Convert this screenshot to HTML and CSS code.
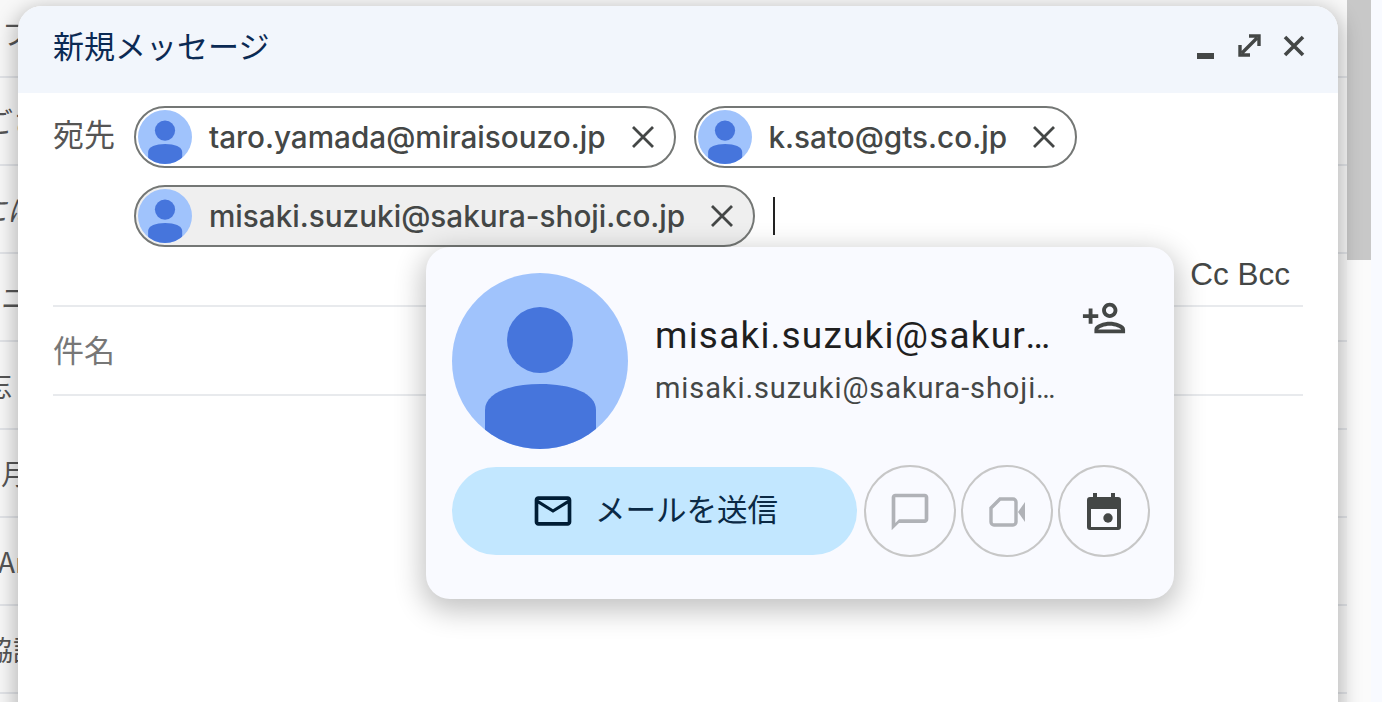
FILE: index.html
```html
<!DOCTYPE html>
<html lang="ja">
<head>
<meta charset="utf-8">
<title>新規メッセージ</title>
<link rel="stylesheet" href="styles.css">
</head>
<body>
<svg class="defs" width="0" height="0" aria-hidden="true">
  <defs>
    <clipPath id="round"><circle cx="88" cy="88" r="88"/></clipPath>
    <symbol id="person" viewBox="0 0 176 176">
      <circle cx="88" cy="88" r="88" fill="#a0c3fc"/>
      <g clip-path="url(#round)" fill="#4675dc">
        <circle cx="88" cy="67" r="33"/>
        <path d="M33 180V137C33 120 58 111 88.500 111S144 120 144 137V180Z"/>
      </g>
    </symbol>
    <symbol id="x" viewBox="0 0 24 24">
      <path d="M2 2L22 22M22 2L2 22" fill="none" stroke="currentColor" stroke-width="2.800"/>
    </symbol>
  </defs>
</svg>

<div class="desktop">
  <div class="list">
    <div class="row"><span class="t1">フ</span></div>
    <div class="row"><span class="t2">ござ</span></div>
    <div class="row"><span class="t3">には</span></div>
    <div class="row"><span class="t4">ニ</span></div>
    <div class="row"><span class="t5">忘</span></div>
    <div class="row"><span class="t6">月</span></div>
    <div class="row"><span class="t7">Ar</span></div>
    <div class="row"><span class="t8">協議</span></div>
  </div>
  <div class="scrollbar"><div class="thumb"></div></div>
  <div class="rail"></div>
</div>

<section class="compose">
  <header class="head">
    <h1 class="title">新規メッセージ</h1>
    <div class="tools">
      <svg class="ti ti-min" viewBox="0 0 17 6"><rect width="17" height="6" fill="currentColor"/></svg>
      <svg class="ti ti-exp" viewBox="0 0 23 23"><path d="M11 2H21V12M2 11V21H12M4 19L19 4" fill="none" stroke="currentColor" stroke-width="3.400"/></svg>
      <svg class="ti ti-close" viewBox="0 0 22 22"><path d="M2 2L20 20M20 2L2 20" fill="none" stroke="currentColor" stroke-width="3.600"/></svg>
    </div>
  </header>

  <div class="to">
    <div class="label">宛先</div>
    <div class="chips">
      <div class="chip">
        <svg class="chip-av"><use href="#person"/></svg>
        <span class="chip-text">taro.yamada@miraisouzo.jp</span>
        <svg class="chip-x"><use href="#x"/></svg>
      </div>
      <div class="chip">
        <svg class="chip-av"><use href="#person"/></svg>
        <span class="chip-text">k.sato@gts.co.jp</span>
        <svg class="chip-x"><use href="#x"/></svg>
      </div>
      <div class="chip chip-active">
        <svg class="chip-av"><use href="#person"/></svg>
        <span class="chip-text">misaki.suzuki@sakura-shoji.co.jp</span>
        <svg class="chip-x"><use href="#x"/></svg>
      </div>
      <div class="caret"></div>
    </div>
  </div>
  <div class="ccbcc">Cc Bcc</div>
  <div class="subject">件名</div>

  <div class="card">
    <div class="card-top">
      <svg class="card-av"><use href="#person"/></svg>
      <div class="card-names">
        <div class="card-name">misaki.suzuki@sakura-shoji.co.jp</div>
        <div class="card-mail">misaki.suzuki@sakura-shoji.co.jp</div>
      </div>
      <svg class="card-add" viewBox="0 0 24 24"><path transform="translate(24 0) scale(-1 1)" fill="currentColor" d="M13 8c0-2.210-1.790-4-4-4S5 5.790 5 8s1.790 4 4 4 4-1.790 4-4zm-2 0c0 1.100-.9 2-2 2s-2-.9-2-2 .9-2 2-2 2 .9 2 2zM1 18v2h16v-2c0-2.660-5.330-4-8-4s-8 1.340-8 4zm2 0c.2-.71 3.300-2 6-2 2.690 0 5.780 1.280 6 2H3zm17-3v-3h3v-2h-3V7h-2v3h-3v2h3v3h2z"/></svg>
    </div>
    <div class="card-actions">
      <div class="send">
        <svg class="send-ic" viewBox="0 0 24 24"><path fill="currentColor" d="M20 4H4c-1.100 0-2 .9-2 2v12c0 1.100.9 2 2 2h16c1.100 0 2-.9 2-2V6c0-1.100-.9-2-2-2zm0 14H4V8l8 5 8-5v10zm-8-7L4 6h16l-8 5z"/></svg>
        <span class="send-text">メールを送信</span>
      </div>
      <div class="round">
        <svg class="ic-chat" viewBox="0 0 24 24"><path fill="currentColor" d="M20 2H4c-1.100 0-2 .9-2 2v18l4-4h14c1.100 0 2-.9 2-2V4c0-1.100-.9-2-2-2zm0 14H6l-2 2V4h16v12z"/></svg>
      </div>
      <div class="round">
        <svg class="ic-video" viewBox="0 0 36 30"><path d="M11 2H24A3 3 0 0 1 27 5V25A3 3 0 0 1 24 28H5A3 3 0 0 1 2 25V11Z" fill="none" stroke="currentColor" stroke-width="3.400"/><path d="M29 15L36 5V25Z" fill="currentColor"/></svg>
      </div>
      <div class="round round-on">
        <svg class="ic-cal" viewBox="0 0 34 37"><path fill="currentColor" d="M6 0H10V4H24V0H28V4H31A3 3 0 0 1 34 7V34A3 3 0 0 1 31 37H3A3 3 0 0 1 0 34V7A3 3 0 0 1 3 4H6Z"/><rect x="4" y="16" width="26" height="18" fill="#f9faff"/><circle cx="21" cy="25" r="4.700" fill="currentColor"/></svg>
      </div>
    </div>
  </div>
</section>
</body>
</html>
```
FILE: styles.css
```css
* { box-sizing: border-box; }
html, body { margin: 0; height: 100%; overflow: hidden; background: #fff; }
body { font-family: "Roboto", "Noto Sans CJK JP", sans-serif; color: #444746; }
.defs { position: absolute; }

.desktop { display: flex; height: 702px; background: #f8f8f8; }
.list { flex: 1; margin-top: -10px; overflow: hidden; }
.row { display: flex; align-items: center; height: 88px; border-bottom: 2px solid #e2e4e8; white-space: nowrap; font-size: 28px; color: #555; font-family: "Noto Sans CJK JP", sans-serif; }
.t1 { margin-left: 2px; }
.t2 { margin-left: -15px; }
.t3 { margin-left: -21px; font-style: italic; }
.t4 { margin-left: 1px; }
.t5 { margin-left: -16px; }
.t6 { margin-left: 1px; }
.t7 { margin-left: -2px; }
.t8 { margin-left: -15px; }
.scrollbar { flex: 0 0 24px; background: #fbfbfb; }
.thumb { height: 260px; background: #c8c8c8; }
.rail { flex: 0 0 11px; background: #f8faff; }

.compose { position: absolute; left: 18px; top: 6px; width: 1320px; height: 760px; background: #fff; border-radius: 24px 24px 0 0; box-shadow: 0 6px 20px 4px rgba(0, 0, 0, .25); }
.head { display: flex; align-items: center; justify-content: space-between; height: 87px; padding: 0 33px 0 35px; background: #f2f6fc; border-radius: 24px 24px 0 0; }
.title { margin: -10px 0 0; font-size: 31px; font-weight: 400; color: #0b2a54; font-family: "Noto Sans CJK JP", sans-serif; }
.tools { display: flex; align-items: center; gap: 0; color: #444746; }
.ti { display: block; flex: none; }
.ti-min { width: 17px; height: 6px; margin: 12px 24px 0 0; }
.ti-exp { width: 23px; height: 23px; margin: -8px 22px 0 0; }
.ti-close { width: 22px; height: 22px; margin-top: -8px; }

.to { display: flex; padding: 13px 0 0 35px; }
.label { flex: 0 0 81px; height: 62px; line-height: 54px; font-size: 31px; font-family: "Noto Sans CJK JP", sans-serif; color: #555; }
.chips { display: flex; flex-wrap: wrap; align-items: center; gap: 17px 18px; width: 1100px; }
.chip { display: flex; align-items: center; height: 62px; padding: 0 19px 0 2px; border: 2px solid #747775; border-radius: 31px; background: #fff; }
.chip-active { background: #efefef; }
.chip-av { flex: none; width: 54px; height: 54px; }
.chip-text { margin-left: 17px; font-family: "Inter", "Roboto", sans-serif; font-size: 29.700px; font-weight: 500; white-space: nowrap; color: #444746; }
.chip-x { flex: none; width: 24px; height: 24px; margin-left: 25px; color: #444746; }
.caret { width: 2px; height: 38px; margin-left: 0; background: #222; }

.ccbcc { height: 60px; margin: 0 35px; padding: 9px 13px 0 0; border-bottom: 2px solid #e8eaed; text-align: right; font-family: "Liberation Sans", sans-serif; font-size: 31.500px; line-height: 36px; color: #444746; }
.subject { height: 89px; margin: 0 35px; border-bottom: 2px solid #e8eaed; line-height: 84px; font-size: 31px; color: #777; font-family: "Noto Sans CJK JP", sans-serif; }

.card { position: absolute; left: 408px; top: 241px; width: 748px; height: 352px; padding: 26px 24px 0 26px; background: #f9faff; border-radius: 24px; box-shadow: 0 8px 28px 4px rgba(0, 0, 0, .24); }
.card-top { display: flex; align-items: flex-start; }
.card-av { flex: none; width: 176px; height: 176px; }
.card-names { flex: 0 0 405px; margin-left: 27px; padding-top: 41px; min-width: 0; }
.card-name, .card-mail { overflow: hidden; white-space: nowrap; text-overflow: ellipsis; }
.card-name { font-size: 37px; letter-spacing: 1.200px; line-height: 44px; color: #1f1f1f; width: 400px; }
.card-mail { margin-top: 12px; font-size: 29px; letter-spacing: .9px; line-height: 36px; color: #444746; width: 405px; }
.card-add { flex: none; width: 46px; height: 46px; margin: 22px 0 0 21px; color: #444746; }
.card-actions { display: flex; align-items: center; gap: 5px; margin-top: 16px; }
.send { flex: 0 0 405px; display: flex; align-items: center; justify-content: center; gap: 20px; height: 88px; margin-right: 2px; background: #c2e7ff; border-radius: 44px; font-size: 30.500px; color: #0b2a45; font-family: "Noto Sans CJK JP", sans-serif; }
.send-text { margin-top: -6px; }
.send-ic { flex: none; width: 44px; height: 44px; color: #001d35; }
.round { flex: 0 0 92px; display: flex; align-items: center; justify-content: center; height: 92px; border: 2px solid #c7c7c7; border-radius: 50%; color: #b0b2b7; }
.round-on { color: #444746; }
.ic-chat { width: 44px; height: 44px; margin-top: 2px; }
.ic-video { width: 36px; height: 30px; margin-top: 1px; }
.ic-cal { width: 34px; height: 37px; }
```
